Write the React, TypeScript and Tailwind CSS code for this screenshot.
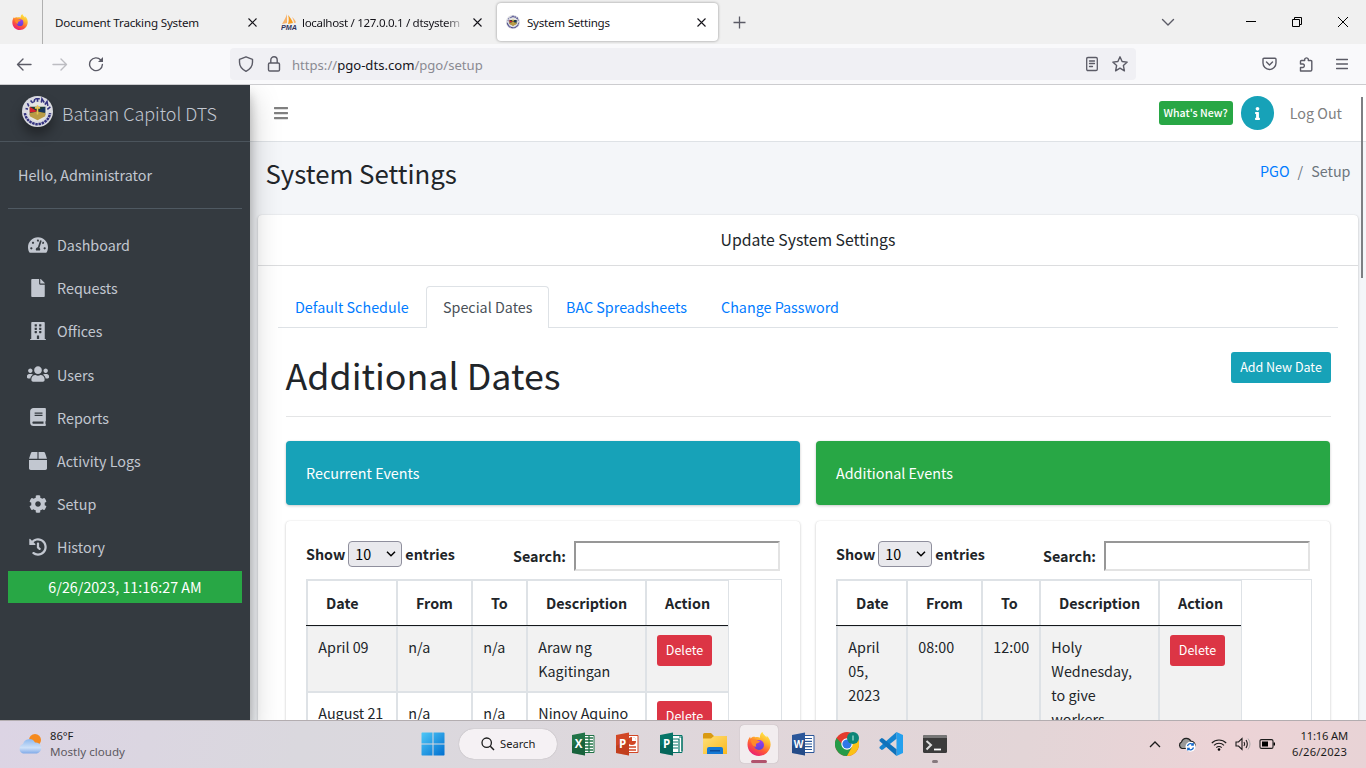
import React from 'react';
import { FaTachometerAlt, FaFile, FaBuilding, FaUsers, FaBook, FaBox, FaCog, FaHistory, FaBars, FaInfo } from 'react-icons/fa';

function Seal({ size }: { size: number }) {
  return (
    <svg width={size} height={size} viewBox="0 0 30 30" className="shrink-0">
      <circle cx="15" cy="15" r="15" fill="#d9dae0" />
      <path d="M2.800 16.500A12.300 12.300 0 0 0 27.200 16.500" fill="none" stroke="#33327f" strokeWidth="2.400" strokeDasharray="2.400 .7" />
      <path d="M3.400 12l3 .8M5.300 7l1.300 3M8.300 4.300l2.600 3M11 7.500l1.500-4.500M15 2.600V7M12.800 2.700h4.400M18.500 7.300l.8-4.500 2.200 3.500M22 8.500l2.200-3 .8 4M24.500 13l3-2.500" fill="none" stroke="#33327f" strokeWidth="1.500" />
      <circle cx="15" cy="15" r="9.500" fill="#e4e4e2" />
      <path d="M7.500 10.500h15v8L15 22.500l-7.500-4z" fill="#1d3b32" />
      <path d="M7.500 10.500l7.500 4.500-7.500 1z" fill="#d8202f" />
      <path d="M22.500 10.500L15 15l7.500 1z" fill="#17355e" />
      <path d="M7.500 16.500L15 15l7.500 1.500v3L15 23.500l-7.500-4z" fill="#b99b45" />
      <path d="M15 9v9M12.500 11.500h5" stroke="#e7c452" strokeWidth="1.500" />
    </svg>
  );
}

function Firefox({ size }: { size: number }) {
  return (
    <svg width={size} height={size} viewBox="0 0 24 24" className="shrink-0">
      <defs>
        <linearGradient id="fx" x1=".8" y1="0" x2=".25" y2="1">
          <stop offset="0" stopColor="#fff04a" />
          <stop offset=".35" stopColor="#ffb22e" />
          <stop offset=".65" stopColor="#ff5a35" />
          <stop offset="1" stopColor="#e8187c" />
        </linearGradient>
        <linearGradient id="fxp" x1="0" y1="0" x2="0" y2="1">
          <stop offset="0" stopColor="#a23cf0" />
          <stop offset="1" stopColor="#5b45d6" />
        </linearGradient>
      </defs>
      <path d="M15.500 0c.5 2.500 3 3.500 4.200 5.500 0-.7-.1-1.300-.3-2 2.900 2.300 4.400 5.700 4.200 9.300C23.200 19 18.300 24 12 24 5.400 24 .5 19 .5 12.600c0-3.300 1-6 2.700-8.100 0 1 .2 1.500.4 2C5 4.800 6.700 4.300 8.500 5.200c1.800-.3 3.400-.2 4.600.5C12.700 3.300 13.600 1.200 15.500 0z" fill="url(#fx)" />
      <circle cx="12" cy="13" r="5" fill="url(#fxp)" />
      <path d="M4 8c2-1 4.500-1 6.500.5l2.500.8c-.6 1.700-2.300 1.600-3.500 2.300-.8.600-.8 2-.1 3C6 15 4 11.500 4 8z" fill="#ff8a2b" />
    </svg>
  );
}

const ic = { fill: 'none', stroke: '#5b5b66', strokeWidth: 1.4, strokeLinecap: 'round' as const, strokeLinejoin: 'round' as const };

function Close({ color = '#15141a' }: { color?: string }) {
  return (
    <svg width="9" height="9" viewBox="0 0 9 9" className="shrink-0">
      <path d="M.5.5l8 8m0-8l-8 8" stroke={color} strokeWidth="1.100" fill="none" />
    </svg>
  );
}

function TabStrip() {
  return (
    <div className="flex h-11 shrink-0 items-center bg-[#f0f0f0] font-['Noto_Sans',sans-serif] text-[11.6px] leading-4 text-[#15141a]">
      <div className="flex h-11 w-[43px] items-center border-r border-[#b0b0b0] pl-3">
        <Firefox size={16} />
      </div>
      <div className="flex w-[238px] items-center pl-3 pr-6">
        <span className="w-[193px] whitespace-nowrap pt-px tracking-[-0.18px]">Document Tracking System</span>
        <Close />
      </div>
      <div className="flex w-[216px] items-center">
        <svg width="16" height="16" viewBox="0 0 16 16" className="mr-[5px] shrink-0">
          <path d="M6 0C5 3 3 7 1 10l5-1z" fill="#f7b26b" />
          <path d="M7 1c1 3 1 6 0 9l5-1C11 6 9 3 7 1z" fill="#f89c1c" />
          <path d="M11 3c1 2 2 4 2 6l2-.5C14 6 13 4.500 11 3z" fill="#f7b26b" />
          <text x="0" y="15.500" textLength="16" lengthAdjust="spacingAndGlyphs" fontFamily="Liberation Sans" fontWeight="bold" fontStyle="italic" fontSize="6.500" fill="#33335c">PMA</text>
        </svg>
        <span className="w-[163px] overflow-hidden whitespace-nowrap pt-px tracking-[-0.34px] [mask-image:linear-gradient(to_right,black_88%,transparent_100%)]">localhost / 127.0.0.1 / dtsystem</span>
        <span className="ml-2"><Close /></span>
      </div>
      <div className="flex h-[38px] w-[221px] items-center rounded-[4px] bg-white pl-[9px] pr-[12px] shadow-[0_0_3px_rgba(0,0,0,0.4)]">
        <Seal size={14} />
        <span className="ml-[7px] grow pt-px tracking-[-0.25px]">System Settings</span>
        <Close />
      </div>
      <svg width="13" height="13" viewBox="0 0 13 13" className="ml-[15px]">
        <path d="M6.500.5v12M.5 6.500h12" stroke="#5b5b66" strokeWidth="1.300" />
      </svg>
      <div className="flex grow items-center justify-end pr-[18px]">
        <svg width="14" height="9" viewBox="0 0 14 9" className="mr-[70px]"><path d="M1.500 1.500L7 7l5.500-5.500" {...ic} /></svg>
        <svg width="12" height="10" viewBox="0 0 12 10" className="mr-[35px]"><path d="M1 4.500h10" stroke="#000" /></svg>
        <svg width="10" height="10" viewBox="0 0 10 10" className="mr-9"><path d="M.5 2.500h7v7h-7zM2.500 2V.5h7v7H8" stroke="#000" fill="none" /></svg>
        <svg width="10" height="10" viewBox="0 0 10 10"><path d="M0 0l10 10M10 0L0 10" stroke="#000" /></svg>
      </div>
    </div>
  );
}

function NavBar() {
  return (
    <div className="flex h-[41px] shrink-0 items-center border-b border-[#cccccf] bg-[#f9f9fb] pl-4">
      <svg width="16" height="16" viewBox="0 0 16 16"><path d="M15 8.500H1.500M7 3L1.500 8.500 7 14" {...ic} /></svg>
      <svg width="16" height="16" viewBox="0 0 16 16" className="ml-5"><path d="M1 8.500h13.500M9 3l5.500 5.500L9 14" {...ic} stroke="#bdbdc2" /></svg>
      <svg width="16" height="16" viewBox="0 0 16 16" className="ml-5"><path d="M12.800 4A6.400 6.400 0 1 0 14.400 8.500" {...ic} /><path d="M15 1v5h-5z" fill="#5b5b66" /></svg>
      <div className="ml-[126px] flex h-8 w-[906px] items-center rounded-[4px] bg-[#f0f0f4] pl-2 pr-2">
        <svg width="16" height="16" viewBox="0 0 16 16"><path d="M8 .8l6.500 2.500v3c0 4-2.500 7-6.500 9-4-2-6.500-5-6.500-9v-3z" {...ic} /></svg>
        <svg width="16" height="16" viewBox="0 0 16 16" className="ml-3"><path d="M3.800 7h8.400q1.300 0 1.300 1.300v5.400q0 1.300-1.300 1.300H3.800q-1.300 0-1.300-1.300V8.300Q2.500 7 3.800 7zM4.800 7V4a3.200 3.200 0 0 1 6.400 0v3" {...ic} /></svg>
        <div className="ml-[10px] grow whitespace-nowrap pt-[2px] font-['Noto_Sans',sans-serif] text-[13.1px] leading-5 text-[#8a8a92]">
          https://<span className="text-[#15141a]">pgo-dts.com</span>/pgo/setup
        </div>
        <svg width="14" height="16" viewBox="0 0 14 16"><path d="M3 1.500h8q1.300 0 1.300 1.300v10.400q0 1.300-1.300 1.300H3q-1.300 0-1.300-1.300V2.800Q1.700 1.500 3 1.500zM4.500 5h5M4.500 7.500h5M4.500 10.500h3" {...ic} strokeWidth={1.300} /></svg>
        <svg width="16" height="16" viewBox="0 0 16 16" className="ml-[13px]"><path d="M8 .8l2.100 4.700 5.100.6-3.800 3.500 1 5.200L8 12.200l-4.400 2.600 1-5.200L.8 6.100l5.100-.6z" {...ic} /></svg>
      </div>
      <div className="flex grow items-center justify-end pr-[18px]">
        <svg width="15" height="14" viewBox="0 0 15 14" className="mr-[22px]"><path d="M2 1.200h11q1 0 1 1V6a6.500 6.500 0 0 1-13 0V2.200q0-1 1-1zM4.500 5l3 3 3-3" {...ic} /></svg>
        <svg width="15" height="16" viewBox="0 0 15 16" className="mr-[22px]"><path d="M1.500 15h10q1.300 0 1.300-1.300V5.500q0-1-1-1H9.300V3a2 2 0 0 0-3.600 0v1.500H2.500q-1 0-1 1V8H4a1.800 1.800 0 0 1 0 3.500H1.500z" {...ic} /></svg>
        <svg width="12" height="12" viewBox="0 0 12 12"><path d="M.5 1.500h11M.5 6h11M.5 10.500h11" {...ic} /></svg>
      </div>
    </div>
  );
}

const menu = [
  { label: 'Dashboard', Icon: FaTachometerAlt, size: 20 },
  { label: 'Requests', Icon: FaFile, size: 18 },
  { label: 'Offices', Icon: FaBuilding, size: 18 },
  { label: 'Users', Icon: FaUsers, size: 22 },
  { label: 'Reports', Icon: FaBook, size: 18 },
  { label: 'Activity Logs', Icon: FaBox, size: 18 },
  { label: 'Setup', Icon: FaCog, size: 18 },
  { label: 'History', Icon: FaHistory, size: 18 },
];

function Sidebar() {
  return (
    <aside className="relative z-10 flex w-[250px] shrink-0 flex-col bg-[#343a40] text-[#c2c7d0] shadow-[0_14px_28px_rgba(0,0,0,0.25),0_10px_10px_rgba(0,0,0,0.22)]">
      <div className="flex h-[57px] shrink-0 items-center border-b border-[#4b545c] pl-[22px]">
        <span className="-mt-1 rounded-full shadow-[0_8px_12px_rgba(0,0,0,0.35)]"><Seal size={31} /></span>
        <span className="-mt-px ml-[9px] whitespace-nowrap text-[17.95px] font-light leading-7">Bataan Capitol DTS</span>
      </div>
      <div className="mx-2 flex h-[67px] shrink-0 items-center border-b border-[#4f5962] pl-[10px]">Hello, Administrator</div>
      <nav className="mt-[14.5px] flex flex-col">
        {menu.map(({ label, Icon, size }) => (
          <div key={label} className="flex h-[43.2px] items-center pl-[25px]">
            <span className="flex w-[26px] items-center justify-center pb-[1px]"><Icon size={size} /></span>
            <span className="ml-[6px]">{label}</span>
          </div>
        ))}
      </nav>
      <div className="mx-2 mt-[1.5px] h-8 bg-[#28a745] text-center leading-8 text-white">6/26/2023, 11:16:27 AM</div>
    </aside>
  );
}

type Row = string[];
type EventsProps = { title: string; color: string; cols: string[]; rows: Row[] };

function Delete() {
  return <span className="mt-[-1px] block h-[31px] w-[55px] rounded-[3px] bg-[#dc3545] text-center text-[12.5px] leading-[30px] text-white">Delete</span>;
}

function Events({ title, color, cols, rows }: EventsProps) {
  const heads = ['Date', 'From', 'To', 'Description', 'Action'];
  return (
    <div className="flex w-[514px] flex-col gap-4">
      <div className={`flex h-16 shrink-0 items-center rounded-[4px] pl-5 text-white shadow-[0_0_1px_rgba(0,0,0,0.13),0_1px_3px_rgba(0,0,0,0.2)] ${color}`}>{title}</div>
      <div className="h-[400px] rounded-[4px] bg-white pl-5 pt-5 shadow-[0_0_1px_rgba(0,0,0,0.13),0_1px_3px_rgba(0,0,0,0.2)]">
        <div className="flex h-[38px] w-[474px] items-start justify-between font-bold">
          <div className="flex items-center whitespace-nowrap leading-[26px]">
            Show
            <span className="ml-[3px] mr-[3px] flex h-[26px] w-[54px] items-center justify-between rounded-[4px] border border-[#8f8f9d] bg-[#e9e9ed] pl-[6px] pr-[5px] font-normal text-black">
              10
              <svg width="10" height="6" viewBox="0 0 10 6"><path d="M1 .8l4 4 4-4" stroke="#000" strokeWidth="1.500" fill="none" /></svg>
            </span>
            entries
          </div>
          <div className="flex items-center whitespace-nowrap leading-[30px]">
            Search:
            <span className="ml-2 h-[30px] w-[206px] border-2 border-b-[#e3e3e3] border-l-[#979797] border-r-[#e3e3e3] border-t-[#979797] bg-white" />
          </div>
        </div>
        <div className="h-[340px] w-[476px] border-r border-t border-[#dee2e6]">
          <div className="w-fit border-r border-[#dee2e6]">
            <div className="flex h-[46px] border-b border-[#15181b] font-bold text-[#212529]">
              {heads.map((h, i) => (
                <div key={h} className={`border-l-2 border-t border-[#dee2e6] pl-[18px] leading-[44px] ${cols[i]}`}>{h}</div>
              ))}
            </div>
            {rows.map((r, n) => (
              <div key={r[0]} className={`flex ${n % 2 ? 'h-[66px] bg-white' : rows.length > 1 ? 'h-[67px] bg-[#f2f2f2]' : 'h-[160px] bg-[#f2f2f2]'} ${n ? '' : 'border-t border-[#dee2e6]'}`}>
                {r.map((c, i) => (
                  <div key={i} className={`whitespace-pre border-b-2 border-l-2 border-[#dee2e6] pl-[10.3px] pt-[8px] leading-6 ${cols[i]}`}>{c}</div>
                ))}
                <div className={`border-b-2 border-l-2 border-[#dee2e6] pl-[10px] pt-[9px] ${cols[4]}`}><Delete /></div>
              </div>
            ))}
          </div>
        </div>
      </div>
    </div>
  );
}

const leftCols = ['w-[90px]', 'w-[75px]', 'w-[55px]', 'w-[119px]', 'w-[83px]'];
const rightCols = ['w-[70px]', 'w-[75px]', 'w-[58px]', 'w-[119px]', 'w-[83px]'];

function Content() {
  return (
    <main className="flex min-w-0 grow flex-col bg-[#f4f6f9]">
      <header className="flex h-[57px] shrink-0 items-center border-b border-[#dee2e6] bg-white pl-[23px] pr-6 text-[#808080]">
        <FaBars size={16} />
        <div className="grow" />
        <span className="h-6 w-[74px] rounded-[3px] bg-[#28a745] text-center text-[10.6px] font-medium leading-6 text-white">What's New?</span>
        <span className="ml-2 mr-4 flex h-[34px] w-[33px] items-center justify-center rounded-full bg-[#17a2b8] text-white"><FaInfo size={13} /></span>
        <span>Log Out</span>
      </header>
      <div className="flex h-[73px] shrink-0 items-start justify-between pl-[15.5px] pr-[15.5px] pt-[14px]">
        <h1 className="text-[25.8px] leading-[34px] text-[#212529]">System Settings</h1>
        <div className="flex gap-2 leading-[30px] text-[#6c757d]"><span className="text-[#007bff]">PGO</span><span>/</span><span>Setup</span></div>
      </div>
      <section className="ml-2 h-[560px] w-[1100px] rounded-[4px] bg-white shadow-[0_0_1px_rgba(0,0,0,0.13),0_1px_3px_rgba(0,0,0,0.2)]">
        <div className="h-[51px] border-b border-[#dcdddf] text-center text-[15.8px] leading-[50px] text-[#212529]">Update System Settings</div>
        <div className="ml-5 mt-5 flex h-[42px] w-[1060px] border-b border-[#dee2e6] leading-[42px] text-[#007bff]">
          <span className="w-[148px] pl-[17px]">Default Schedule</span>
          <span className="h-[42px] w-[123px] rounded-t-[4px] border border-b-0 border-[#dee2e6] bg-white pl-4 leading-[40px] text-[#495057]">Special Dates</span>
          <span className="w-[155px] pl-[17px]">BAC Spreadsheets</span>
          <span className="pl-[17px]">Change Password</span>
        </div>
        <div className="ml-7 mt-6 flex h-[65px] w-[1045px] items-start justify-between border-b border-[#e4e5e6]">
          <h2 className="-ml-[0.5px] text-[35.8px] leading-[44px] text-[#212529]">Additional Dates</h2>
          <span className="h-[31px] w-[100px] rounded-[3px] bg-[#17a2b8] text-center text-[12.5px] leading-[30px] text-white">Add New Date</span>
        </div>
        <div className="ml-7 mt-6 flex gap-4">
          <Events title="Recurrent Events" color="bg-[#17a2b8]" cols={leftCols} rows={[['April 09', 'n/a', 'n/a', 'Araw ng\nKagitingan'], ['August 21', 'n/a', 'n/a', 'Ninoy Aquino\nDay']]} />
          <Events title="Additional Events" color="bg-[#28a745]" cols={rightCols} rows={[['April\n05,\n2023', '08:00', '12:00', 'Holy\nWednesday,\nto give\nworkers']]} />
        </div>
      </section>
    </main>
  );
}

function Office({ letter, color, dark, kind }: { letter: string; color: string; dark: string; kind: string }) {
  return (
    <svg width="24" height="24" viewBox="0 0 24 24" className="shrink-0">
      <path d="M12 3.500h11v17H12z" fill="#fff" stroke={color} strokeWidth="1" />
      {kind === 'sheet' && <path d="M14 6h8M14 9h8M14 12h8M14 15h8M14 18h8M18 4v16" stroke={color} strokeWidth="1.300" />}
      {kind === 'slide' && <g><circle cx="17" cy="9" r="4" fill={color} /><path d="M17 9V5a4 4 0 0 1 4 4z" fill="#fff" /><path d="M14 15h7M14 18h7" stroke={color} strokeWidth="1.500" /></g>}
      {kind === 'pub' && <path d="M14 7h6v13M14 10h5M14 13h5M14 16h5M20 5h3v14" stroke={color} strokeWidth="1.200" fill="none" />}
      {kind === 'doc' && <path d="M14 6.500h7M14 9.300h7M14 12h7M14 14.700h7M14 17.500h7" stroke={color} strokeWidth="1.200" />}
      <path d="M1 3l13-2.500v23L1 21z" fill={color} />
      <path d="M1 14l13-7v16.500L1 21z" fill={dark} opacity=".35" />
      <text x="7.500" y="16" textAnchor="middle" fontFamily="Open Sans" fontWeight="bold" fontSize={letter === 'W' ? 10 : 11.5} fill="#fff">{letter}</text>
    </svg>
  );
}

function Taskbar() {
  return (
    <footer className="flex h-12 shrink-0 items-center border-t border-[#b3adb0] bg-[linear-gradient(100deg,#dcd4e4_0%,#dad8de_22%,#dcd8dd_38%,#e0d6da_55%,#e3d5d7_75%,#ecd3d6_90%,#e8d3d6_100%)] pb-px font-['Noto_Sans',sans-serif] text-[11.2px] leading-4 text-[#1b1b1b]">
      <svg width="26" height="22" viewBox="0 0 26 22" className="ml-[17px] shrink-0">
        <defs><linearGradient id="cl" x1="0" y1="0" x2="0" y2="1"><stop offset="0" stopColor="#8db9ee" /><stop offset=".6" stopColor="#cfe1f8" /><stop offset="1" stopColor="#80aae8" /></linearGradient></defs>
        <circle cx="18" cy="7" r="6" fill="#f58a1f" />
        <path d="M6 20.500a5 5 0 0 1 0-9.500 6.500 6.500 0 0 1 12-1.500 5.600 5.600 0 0 1 2 11z" fill="url(#cl)" />
      </svg>
      <div className="ml-[7px] w-[371px] shrink-0 whitespace-nowrap"><div>86°F</div><div className="text-[11.6px] text-[#5d5961]">Mostly cloudy</div></div>
      <svg width="24" height="24" viewBox="0 0 24 24" className="shrink-0">
        <defs><linearGradient id="wn" x1="0" y1="0" x2="1" y2="1"><stop offset="0" stopColor="#4fc8f7" /><stop offset="1" stopColor="#006fd0" /></linearGradient></defs>
        <path d="M1 .5h10.500v11H.5V1zM12.500.5H23l.5.5v10.500h-11zM.5 12.500h11v11H1l-.5-.5zM12.500 12.500h11V23l-.5.5H12.500z" fill="url(#wn)" />
      </svg>
      <div className="ml-[14px] mr-[14px] flex h-[30px] w-[98px] shrink-0 items-center rounded-full bg-[#f5f1f4] pl-[22px] shadow-[0_0_1px_rgba(0,0,0,0.3)]">
        <svg width="14" height="14" viewBox="0 0 14 14"><path d="M9.300 9.300L13 13" stroke="#1b1b1b" strokeWidth="1.500" /><circle cx="5.700" cy="5.700" r="4.700" fill="none" stroke="#1b1b1b" strokeWidth="1.300" /></svg>
        <span className="ml-[5px]">Search</span>
      </div>
      <div className="flex shrink-0 items-center gap-5">
        <Office letter="X" color="#207347" dark="#0c4527" kind="sheet" />
        <Office letter="P" color="#d24726" dark="#a5300f" kind="slide" />
        <Office letter="P" color="#077568" dark="#044a41" kind="pub" />
      </div>
      <svg width="24" height="22" viewBox="0 0 24 22" className="ml-5 shrink-0">
        <defs><linearGradient id="fo" x1="0" y1="0" x2="1" y2="1"><stop offset="0" stopColor="#ffe07a" /><stop offset="1" stopColor="#fbb91d" /></linearGradient></defs>
        <path d="M0 1.500Q0 0 1.500 0H8l3 3h12l1 1v8H0z" fill="#d99a12" />
        <path d="M0 5.500h8L11 3h12q1 0 1 1v17H0z" fill="url(#fo)" />
        <path d="M4 21v-5q0-2 2-2h12q2 0 2 2v5z" fill="#1478d4" />
        <path d="M7 17h10v1.500H7z" fill="#0a4d9c" />
      </svg>
      <div className="relative ml-[13px] flex h-[38px] w-[38px] shrink-0 items-center justify-center rounded-[4px] bg-[#f2edef] shadow-[0_0_1px_rgba(0,0,0,0.3)]">
        <Firefox size={24} />
        <span className="absolute bottom-0 left-[11px] h-[3px] w-4 rounded-full bg-[#b1536d]" />
      </div>
      <div className="ml-[13px]"><Office letter="W" color="#2b579a" dark="#173668" kind="doc" /></div>
      <svg width="24" height="24" viewBox="0 0 24 24" className="ml-5 shrink-0">
        <circle cx="12" cy="12" r="12" fill="#e33b2e" />
        <path d="M1.600 6A12 12 0 0 0 12 24l5-9-5 2.500z" fill="#259b48" />
        <path d="M12 24A12 12 0 0 0 22.400 6H12l5 9z" fill="#fbc116" />
        <circle cx="12" cy="12" r="5.700" fill="#fff" /><circle cx="12" cy="12" r="4.600" fill="#2f77e8" />
        <circle cx="18" cy="6" r="6" fill="#0c8577" />
        <path d="M18 3.500v5" stroke="#8ed6c9" strokeWidth="1.400" />
      </svg>
      <svg width="24" height="24" viewBox="0 0 24 24" className="ml-5 shrink-0">
        <path d="M17.500 0L24 3v18l-6.500 3z" fill="#24a0ee" />
        <path d="M17.500 0v6.800L4 17.500 2.700 18 .5 16.200V15z" fill="#1484d0" />
        <path d="M17.500 24v-6.800L4 6.500 2.700 6 .5 7.800V9z" fill="#0f72bb" />
      </svg>
      <div className="relative ml-5 flex h-[38px] shrink-0 items-center">
        <svg width="24" height="18" viewBox="0 0 24 18">
          <path d="M0 1.500Q0 0 1.500 0h21Q24 0 24 1.500v15q0 1.500-1.500 1.500h-21Q0 18 0 16.500z" fill="#3b3b3b" />
          <path d="M0 1.500Q0 0 1.500 0h21Q24 0 24 1.500V3H0z" fill="#777" />
          <path d="M3.500 6l4.500 4-4.500 4.500" stroke="#ddd" strokeWidth="2" fill="none" /><path d="M11 14.500h7" stroke="#fff" strokeWidth="1.800" />
        </svg>
        <span className="absolute bottom-0 left-[9px] h-[3px] w-[6px] rounded-full bg-[#85797d]" />
      </div>
      <div className="flex grow items-center justify-end pr-[19px]">
        <svg width="12" height="7" viewBox="0 0 12 7"><path d="M1 6l5-5 5 5" stroke="#1b1b1b" strokeWidth="1.300" fill="none" /></svg>
        <svg width="18" height="15" viewBox="0 0 18 15" className="ml-[17px]">
          <path d="M4 11.500a3.500 3.500 0 0 1-.5-6.500A5 5 0 0 1 13 4.500a3.500 3.500 0 0 1 1 7z" fill="#999" stroke="#222" strokeWidth="1.200" />
          <circle cx="12.500" cy="9.800" r="5" fill="#fff" />
          <path d="M9.500 9a3.200 3.200 0 0 1 5.700-1m0-2v2.200h-2M15.500 10.500a3.200 3.200 0 0 1-5.700 1m0 2v-2.200h2" stroke="#1266c9" strokeWidth="1.300" fill="none" />
        </svg>
        <svg width="16" height="13" viewBox="0 0 16 13" className="ml-[15px]"><g stroke="#1b1b1b" strokeWidth="1.100" fill="none"><path d="M.8 5a10.200 10.200 0 0 1 14.400 0M3 7.300a7 7 0 0 1 10 0M5.300 9.600a3.800 3.800 0 0 1 5.400 0" /></g><circle cx="8" cy="11.500" r="1.300" /></svg>
        <svg width="16" height="14" viewBox="0 0 16 14" className="ml-2"><path d="M1 5h2.500L7 1.500v11L3.500 9H1zM9 5q1.300 2 0 4M11 3q2.600 4 0 8" stroke="#1b1b1b" strokeWidth="1.100" fill="none" /><path d="M13 1.500q4 5.500 0 11" stroke="#aaa" strokeWidth="1" fill="none" /></svg>
        <svg width="17" height="10" viewBox="0 0 17 10" className="ml-2"><path d="M2.500.6h10q1.500 0 1.500 1.500v5.800q0 1.500-1.500 1.500h-10Q1 9.400 1 7.900V2.100Q1 .6 2.500.6z" stroke="#1b1b1b" strokeWidth="1.100" fill="none" /><path d="M3 2.500h6v5H3zM14.500 3.500H16v3h-1.500z" /></svg>
        <div className="ml-[15px] w-[56px] whitespace-nowrap text-right"><div className="-mr-px tracking-[-0.15px]">11:16 AM</div><div className="tracking-[0.2px]">6/26/2023</div></div>
      </div>
    </footer>
  );
}

export default function App() {
  return (
    <div className="flex h-[768px] w-[1366px] flex-col overflow-hidden bg-white">
      <TabStrip />
      <NavBar />
      <div className="relative flex h-[635px] shrink-0 overflow-hidden font-['Noto_Sans_CJK_SC',sans-serif] text-[14.33px] leading-6 text-[#212529]">
        <Sidebar />
        <Content />
        <span className="absolute right-[3px] top-3 h-[181px] w-[2px] bg-[#7d7f83]" />
      </div>
      <Taskbar />
    </div>
  );
}
